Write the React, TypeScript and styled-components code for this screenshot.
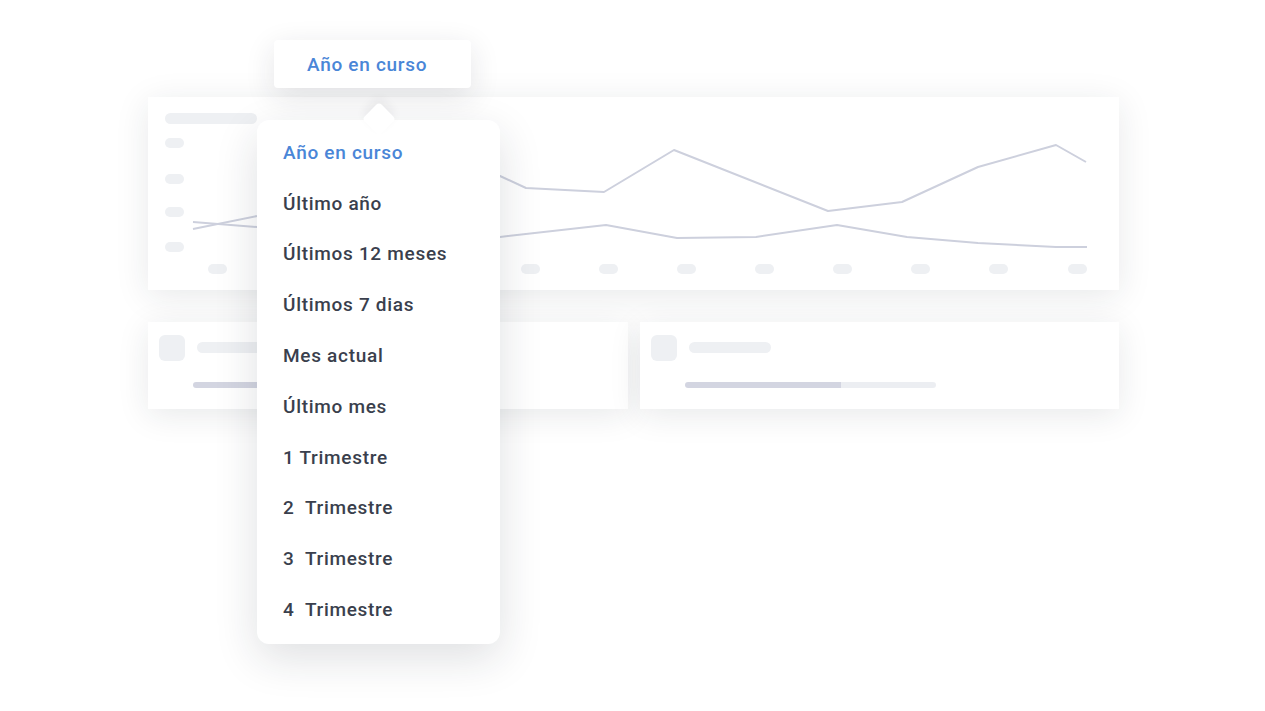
import React from "react";
import styled, { createGlobalStyle } from "styled-components";

const GlobalStyle = createGlobalStyle`
  html, body {
    margin: 0;
    padding: 0;
    background: #ffffff;
    font-family: Roboto, "Liberation Sans", Arial, sans-serif;
  }
`;

const Styles = {
  Page: styled.div`
    position: relative;
    box-sizing: border-box;
    width: 1265px;
    height: 711px;
    padding: 97px 0 0 148px;
    overflow: hidden;
  `,

  Dashboard: styled.div`
    display: flex;
    flex-direction: column;
    gap: 32px;
    width: 971px;
  `,

  ChartCard: styled.div`
    box-sizing: border-box;
    height: 193px;
    padding: 16px 17px 0 17px;
    background: #ffffff;
    box-shadow: 0 6px 32px rgba(30, 35, 50, 0.1);

    .title {
      width: 92px;
      height: 11px;
      border-radius: 6px;
      background: #eef0f3;
    }

    svg {
      display: block;
      margin-top: 8px;
    }
  `,

  CardRow: styled.div`
    display: grid;
    grid-template-columns: 480px 479px;
    gap: 12px;
  `,

  StatCard: styled.div`
    box-sizing: border-box;
    height: 87px;
    padding: 13px 11px;
    background: #ffffff;
    box-shadow: 0 6px 32px rgba(30, 35, 50, 0.1);

    .head {
      display: flex;
      align-items: flex-start;
      gap: 12px;
    }
    .icon {
      width: 26px;
      height: 26px;
      border-radius: 6px;
      background: #eef0f3;
    }
    .label {
      width: 82px;
      height: 11px;
      margin-top: 7px;
      border-radius: 6px;
      background: #eef0f3;
    }
  `,

  Progress: styled.div<{ value: number }>`
    width: 251px;
    height: 6px;
    margin: 21px 0 0 34px;
    border-radius: 3px;
    background: linear-gradient(
      to right,
      #d3d5e1 0%,
      #d3d5e1 ${(p) => p.value}%,
      #eceef2 ${(p) => p.value}%
    );
  `,

  Overlay: styled.div`
    position: absolute;
    left: 257px;
    top: 40px;
    display: flex;
    flex-direction: column;
    align-items: flex-start;
  `,

  Trigger: styled.div`
    box-sizing: border-box;
    width: 197px;
    height: 48px;
    margin-left: 17px;
    padding-left: 33px;
    display: flex;
    align-items: center;
    background: #ffffff;
    border-radius: 4px;
    box-shadow: 0 8px 30px rgba(30, 35, 50, 0.12);
    color: #4a86d7;
    font-size: 19px;
    font-weight: 500;
    letter-spacing: 0.7px;
  `,

  Menu: styled.div`
    position: relative;
    box-sizing: border-box;
    width: 243px;
    margin-top: 32px;
    padding: 7px 0 9px;
    background: #ffffff;
    border-radius: 12px;
    box-shadow: 0 14px 44px rgba(30, 35, 50, 0.14);

    &::before {
      content: "";
      position: absolute;
      left: 110px;
      top: -13px;
      width: 24px;
      height: 24px;
      background: #ffffff;
      border-radius: 4px;
      transform: rotate(45deg);
      box-shadow: -4px -4px 10px rgba(30, 35, 50, 0.06);
    }
  `,

  MenuItem: styled.div<{ active?: boolean }>`
    position: relative;
    height: 50.8px;
    padding-left: 26px;
    display: flex;
    align-items: center;
    white-space: pre;
    font-size: 19px;
    font-weight: 500;
    letter-spacing: 0.7px;
    color: ${(p) => (p.active ? "#4a86d7" : "#3a3f4d")};
  `,
};

const upper = [
  [28, 97], [92, 84], [135, 73], [215, 58], [285, 38], [335, 44], [361, 56],
  [439, 60], [509, 18], [663, 79], [737, 70], [813, 35], [891, 13], [921, 30],
];
const lower = [
  [28, 90], [92, 95], [135, 100], [215, 113], [285, 111], [335, 105], [441, 93],
  [512, 106], [591, 105], [672, 93], [742, 105], [813, 111], [891, 115], [922, 115],
];
const yTicks = [6, 42, 75, 110];
const xTicks = [43, 121, 199, 278, 356, 434, 512, 590, 668, 746, 824, 903];

function LineChart() {
  const toPoints = (pts: number[][]) => pts.map((p) => p.join(",")).join(" ");
  return (
    <svg width="935" height="150" viewBox="0 0 935 150">
      {yTicks.map((y) => (
        <rect key={y} x="0" y={y} width="19" height="10" rx="5" fill="#eef0f3" />
      ))}
      {xTicks.map((x) => (
        <rect key={x} x={x} y="132" width="19" height="10" rx="5" fill="#eef0f3" />
      ))}
      <polyline points={toPoints(upper)} fill="none" stroke="#cdd0dd" strokeWidth="2" strokeLinejoin="round" />
      <polyline points={toPoints(lower)} fill="none" stroke="#cdd0dd" strokeWidth="2" strokeLinejoin="round" />
    </svg>
  );
}

function StatCard({ value }: { value: number }) {
  return (
    <Styles.StatCard>
      <div className="head">
        <div className="icon" />
        <div className="label" />
      </div>
      <Styles.Progress value={value} />
    </Styles.StatCard>
  );
}

const periods = [
  "Año en curso",
  "Último año",
  "Últimos 12 meses",
  "Últimos 7 dias",
  "Mes actual",
  "Último mes",
  "1 Trimestre",
  "2  Trimestre",
  "3  Trimestre",
  "4  Trimestre",
];

export default function App() {
  const selected = periods[0];

  return (
    <Styles.Page>
      <GlobalStyle />
      <Styles.Dashboard>
        <Styles.ChartCard>
          <div className="title" />
          <LineChart />
        </Styles.ChartCard>
        <Styles.CardRow>
          <StatCard value={62} />
          <StatCard value={62} />
        </Styles.CardRow>
      </Styles.Dashboard>

      <Styles.Overlay>
        <Styles.Trigger>{selected}</Styles.Trigger>
        <Styles.Menu>
          {periods.map((period) => (
            <Styles.MenuItem key={period} active={period === selected}>
              {period}
            </Styles.MenuItem>
          ))}
        </Styles.Menu>
      </Styles.Overlay>
    </Styles.Page>
  );
}
